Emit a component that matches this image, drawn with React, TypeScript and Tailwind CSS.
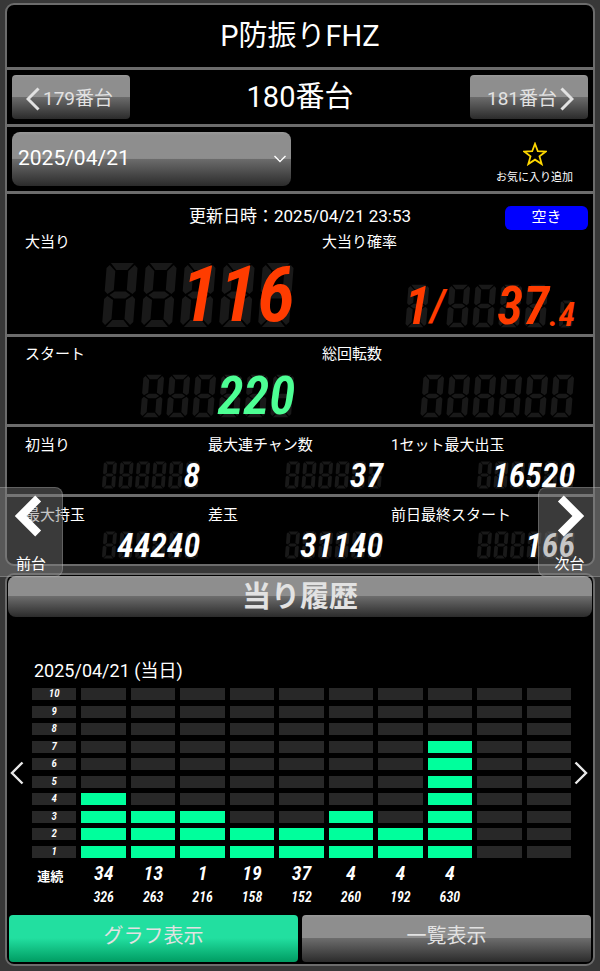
import React from 'react';

const ledFont = "font-['Liberation_Sans_Narrow','Roboto_Condensed',Roboto,sans-serif] italic";
const gray = 'bg-[linear-gradient(#999_0%,#8e8e8e_6%,#8e8e8e_49%,#6c6c6c_50%,#2b2b2b_100%)]';

const ledSizes = {
  lg: { text: 'text-[78px] leading-[66px] font-semibold', glass: 'h-[66px]' },
  md: { text: 'text-[53px] leading-[44px] font-semibold', glass: 'h-[44px]' },
  sm: { text: 'text-[34px] leading-[28px] font-semibold', glass: 'h-[28px]' },
};

type LedProps = {
  value?: string;
  slots?: number;
  size: keyof typeof ledSizes;
  color?: string;
};

// unlit segments of one display cell, 39 x 66
const segments =
  'M7 1H30L24 8H13Z M6 3L12 9V28L6 32L3 29V6Z M31 3L34 6V29L31 32L25 28V9Z M8 33L13 29.5H24L29 33L24 36.5H13Z M6 34L12 38V57L6 63L3 60V37Z M31 34L34 37V60L31 63L25 57V38Z M7 65L13 58H24L30 65Z';

const Led: React.FC<LedProps> = ({ value = '', slots = 6, size, color = 'text-white' }) => (
  <span className="inline-grid justify-items-end align-top">
    <svg viewBox={`0 0 ${slots * 39} 66`} className={`col-start-1 row-start-1 ${ledSizes[size].glass}`} fill="#191919" aria-hidden="true">
      {Array.from({ length: slots }, (_, i) => (
        <path key={i} d={segments} transform={`translate(${i * 39 + 4}) skewX(-4.5)`} />
      ))}
    </svg>
    <span className={`col-start-1 row-start-1 ${ledFont} ${ledSizes[size].text} ${color}`}>{value}</span>
  </span>
);

const Chevron: React.FC<{ dir: 'left' | 'right'; width: number; className: string }> = ({ dir, width, className }) => (
  <svg viewBox="0 0 14 24" className={className} fill="none" stroke="currentColor" strokeWidth={width} aria-hidden="true">
    <path d={dir === 'left' ? 'M12.5 1.5L2 12l10.5 10.5' : 'M1.5 1.5L12 12 1.5 22.5'} />
  </svg>
);

const smallStats = [
  [
    { label: '初当り', value: '8' },
    { label: '最大連チャン数', value: '37' },
    { label: '1セット最大出玉', value: '16520' },
  ],
  [
    { label: '最大持玉', value: '44240' },
    { label: '差玉', value: '31140' },
    { label: '前日最終スタート', value: '166' },
  ],
];

const levels = [10, 9, 8, 7, 6, 5, 4, 3, 2, 1];

const history = [
  { bars: 4, count: '34', spins: '326' },
  { bars: 3, count: '13', spins: '263' },
  { bars: 3, count: '1', spins: '216' },
  { bars: 2, count: '19', spins: '158' },
  { bars: 2, count: '37', spins: '152' },
  { bars: 3, count: '4', spins: '260' },
  { bars: 2, count: '4', spins: '192' },
  { bars: 7, count: '4', spins: '630' },
  { bars: 0, count: '', spins: '' },
  { bars: 0, count: '', spins: '' },
];

const MachinePanel: React.FC = () => (
  <section className="rounded-[9px] border-2 border-[#6c6c6c] bg-black divide-y-3 divide-[#6c6c6c]">
    <h1 className="py-3 text-center text-[29px] leading-[38px]">P防振りFHZ</h1>

    <nav className="flex items-center justify-between p-[5px]">
      <button className={`flex w-[118px] h-11 items-center rounded-[4px] pl-[14px] pt-1 text-[19px] text-[#e2e2e2] ${gray}`}>
        <Chevron dir="left" width={3} className="w-[14px] h-6 mr-[3px]" />
        179番台
      </button>
      <h2 className="text-[29px] leading-[44px]">180番台</h2>
      <button className={`flex w-[118px] h-11 items-center justify-end rounded-[4px] pr-[14px] pt-1 text-[19px] text-[#e2e2e2] ${gray}`}>
        181番台
        <Chevron dir="right" width={3} className="w-[14px] h-6 ml-[3px]" />
      </button>
    </nav>

    <div className="flex items-center justify-between p-[5px]">
      <div className="relative w-[279px]">
        <select aria-label="日付" className={`w-full h-[54px] appearance-none rounded-lg pl-[6px] text-[21px] ${gray}`}>
          <option>2025/04/21</option>
        </select>
        <svg viewBox="0 0 12 8" className="pointer-events-none absolute right-[5px] top-[23px] w-3 h-2" fill="none" stroke="white" strokeWidth="1.4" aria-hidden="true">
          <path d="M.5 1L6 6.5 11.5 1" />
        </svg>
      </div>
      <button className="flex flex-col items-center pt-[10px] pr-[15px] text-[11px] leading-4">
        <svg viewBox="0 0 24 24" className="mb-1 w-6 h-6" fill="none" stroke="#ffd800" strokeWidth="1.8" aria-hidden="true">
          <path d="M12 1.8l2.8 7.4 8 .3-6.3 4.9 2.2 7.7L12 17.7l-6.7 4.4 2.2-7.7-6.3-4.9 8-.3z" />
        </svg>
        お気に入り追加
      </button>
    </div>

    <div className="pt-3 pb-[6px]">
      <div className="grid grid-cols-[1fr_auto_1fr] items-start pr-[5px]">
        <p className="col-start-2 pl-[5px] text-[17px] leading-5">更新日時：2025/04/21 23:53</p>
        <span className="w-[83px] h-6 justify-self-end rounded-md bg-[#0000ff] text-center text-[15px] leading-[22px]">空き</span>
      </div>
      <dl className="grid grid-cols-[297fr_253fr] px-[18px] text-[15px] leading-6">
        <div>
          <dt>大当り</dt>
          <dd className="flex justify-end pt-2 pr-[27px]">
            <Led size="lg" slots={5} value="116" color="text-[#ff3c00]" />
          </dd>
        </div>
        <div className="flex flex-col justify-between">
          <dt>大当り確率</dt>
          <dd className="flex items-end justify-end text-[#ff3c00]">
            <Led size="md" slots={1} value="1" color="text-[#ff3c00]" />
            <span className={`${ledFont} text-[44px] leading-[44px] font-semibold`}>/</span>
            <Led size="md" slots={4} value="37" color="text-[#ff3c00]" />
            <span className={`${ledFont} text-[34px] leading-[28px] font-semibold`}>.</span>
            <Led size="sm" slots={1} value="4" color="text-[#ff3c00]" />
          </dd>
        </div>
      </dl>
    </div>

    <dl className="grid grid-cols-[297fr_253fr] px-[18px] pt-[5px] pb-[6px] text-[15px] leading-6">
      <div>
        <dt>スタート</dt>
        <dd className="flex justify-end pt-2 pr-[27px]">
          <Led size="md" value="220" color="text-[#4dff94]" />
        </dd>
      </div>
      <div>
        <dt>総回転数</dt>
        <dd className="flex justify-end pt-2">
          <Led size="md" />
        </dd>
      </div>
    </dl>

    {smallStats.map((row) => (
      <dl key={row[0].label} className="grid grid-cols-[183fr_183fr_184fr] px-[18px] pt-[6px] pb-[5px] text-[15px] leading-6">
        {row.map((stat) => (
          <div key={stat.label} className="group">
            <dt className="whitespace-nowrap">{stat.label}</dt>
            <dd className="flex justify-end pt-1 pr-2 group-last:pr-0">
              <Led size="sm" value={stat.value} />
            </dd>
          </div>
        ))}
      </dl>
    ))}
  </section>
);

const HistoryPanel: React.FC = () => (
  <section className="mt-[7px] rounded-[9px] border-2 border-[#6c6c6c] bg-black p-px">
    <h2 className={`h-[41px] rounded-lg text-center text-[29px] leading-[42px] font-bold text-[#e2e2e2] ${gray}`}>当り履歴</h2>
    <p className="pt-10 pl-[26px] text-lg leading-7">2025/04/21 (当日)</p>

    <div className="mt-[3px] flex items-center">
      <button aria-label="前へ" className="w-6 shrink-0 pl-[2px] text-[#e8e8e8]">
        <Chevron dir="left" width={2.4} className="w-[14px] h-6" />
      </button>
      <div className="grid flex-1 grid-cols-11 gap-x-[5px]">
        <div className="flex h-[170px] flex-col justify-between">
          {levels.map((n) => (
            <span key={n} className={`h-3 bg-[#282828] text-center text-[11px] leading-3 font-semibold ${ledFont}`}>
              {n}
            </span>
          ))}
        </div>
        {history.map((h, i) => (
          <div key={i} className="flex h-[170px] flex-col justify-between">
            {levels.map((n) => (
              <span key={n} className={`h-3 ${n <= h.bars ? 'bg-[#00ff9c]' : 'bg-[#282828]'}`} />
            ))}
          </div>
        ))}
      </div>
      <button aria-label="次へ" className="w-[21px] shrink-0 pl-[3px] text-[#e8e8e8]">
        <Chevron dir="right" width={2.4} className="w-[14px] h-6" />
      </button>
    </div>

    <div className="grid grid-cols-11 gap-x-[5px] pl-6 pr-[21px] pt-[3px] text-center">
      <span className="pt-1 pr-2 text-[13px] leading-6 font-bold whitespace-nowrap">連続</span>
      {history.map((h, i) => (
        <div key={i} className={`font-semibold ${ledFont}`}>
          <div className="h-6 text-xl leading-6">{h.count}</div>
          <div className="h-6 text-sm leading-6">{h.spins}</div>
        </div>
      ))}
    </div>

    <div className="mt-[5px] grid grid-cols-2 gap-1 p-px text-xl">
      <button className="h-[47px] rounded-[4px] bg-[linear-gradient(#22dfa0_0%,#22dfa0_49%,#009c62_100%)] pb-[6px] text-[#e2e2e2]">グラフ表示</button>
      <button className={`h-[47px] rounded-[4px] pb-[6px] text-[#e2e2e2] ${gray}`}>一覧表示</button>
    </div>
  </section>
);

const App: React.FC = () => (
  <main className="relative min-h-screen bg-[#383838] px-[5px] pt-[3px] pb-1 text-white font-[Roboto,'Noto_Sans_CJK_JP',sans-serif]">
    <MachinePanel />
    <HistoryPanel />
    <button className="absolute left-0 top-[487px] z-20 flex w-[63px] flex-col items-center rounded-r-lg border border-l-0 border-white/20 bg-[#808080]/45 pt-2 text-[15px] leading-6">
      <Chevron dir="left" width={5} className="mb-4 mr-1 w-6 h-10 overflow-visible" />
      前台
    </button>
    <button className="absolute right-0 top-[487px] z-20 flex w-[62px] flex-col items-center rounded-l-lg border border-r-0 border-white/20 bg-[#808080]/45 pt-2 text-[15px] leading-6">
      <Chevron dir="right" width={5} className="mb-4 w-6 h-10 overflow-visible" />
      次台
    </button>
  </main>
);

export default App;
